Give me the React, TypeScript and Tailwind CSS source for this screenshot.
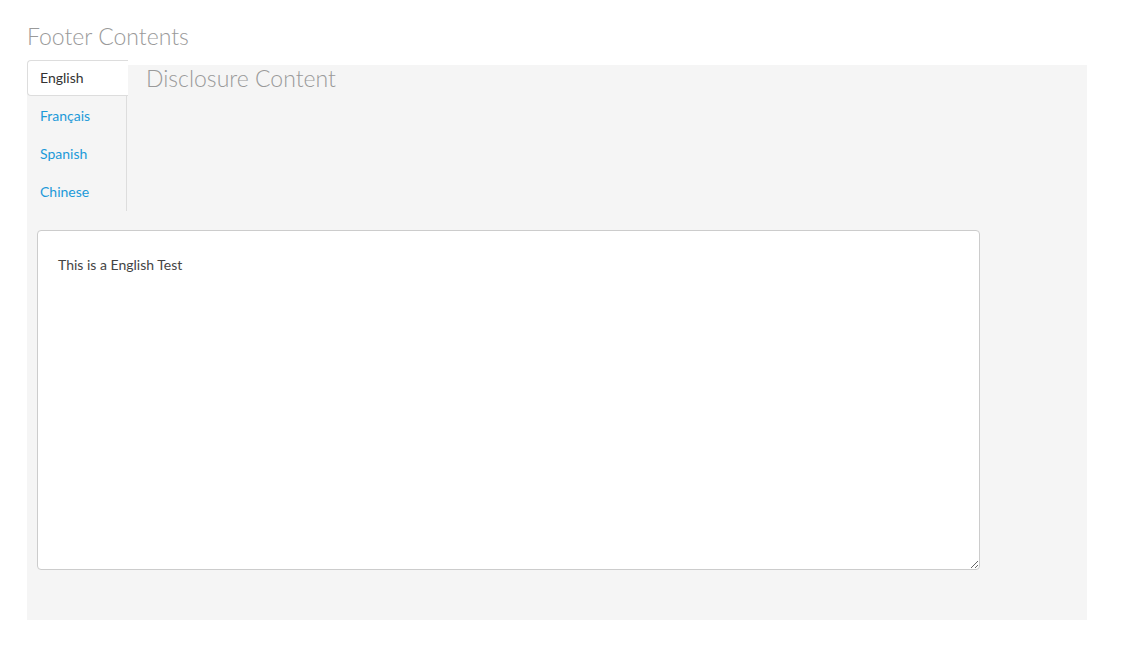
import React, { useState } from 'react';

const tabs = ['English', 'Français', 'Spanish', 'Chinese'];

const App: React.FC = () => {
  const [active, setActive] = useState<string>('English');

  return (
    <div className="min-h-[652px] bg-white pl-[27px] pt-[21px]" style={{ fontFamily: 'Lato, "Open Sans", sans-serif' }}>
      <h2 className="text-[23px] font-light leading-[30px] text-[#9a9a9a]">Footer Contents</h2>

      <div className="mt-[14px] h-[555px] w-[1060px] bg-[#f5f5f5]">
        <div className="flex">
          <ul className="-mt-[5px] w-[100px] border-r border-[#dddddd]">
            {tabs.map((t, i) => (
              <li key={t} className={i === 0 ? 'h-[37px]' : 'h-[38px]'}>
                {t === active ? (
                  <button
                    onClick={() => setActive(t)}
                    className="flex h-[36px] w-[101px] items-center rounded-l-[4px] border border-r-0 border-[#dddddd] bg-white pb-[2px] pl-[12px] text-[14px] text-[#333333]"
                  >
                    {t}
                  </button>
                ) : (
                  <button
                    onClick={() => setActive(t)}
                    className="flex h-[38px] w-full items-center pb-[2px] pl-[13px] text-[14px] text-[#1c9ad9]"
                  >
                    {t}
                  </button>
                )}
              </li>
            ))}
          </ul>
          <div className="pl-[19px]">
            <h3 className="-mt-[2px] text-[23px] font-light leading-[30px] text-[#9a9a9a]">Disclosure Content</h3>
          </div>
        </div>

        <div className="pl-[10px] pt-[19px]">
          <textarea
            defaultValue={`This is a ${active} Test`}
            className="block h-[340px] w-[943px] rounded-[4px] border border-[#cccccc] bg-white px-[20px] pt-[24px] text-[14px] leading-[20px] text-[#444444] outline-none"
          />
        </div>
      </div>
    </div>
  );
};

export default App;
